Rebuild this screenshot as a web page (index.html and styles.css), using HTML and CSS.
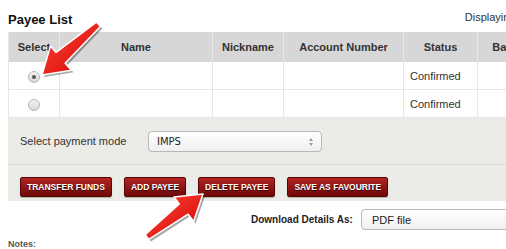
FILE: index.html
```html
<!DOCTYPE html>
<html lang="en">
<head>
  <meta charset="UTF-8" />
  <meta name="viewport" content="width=device-width, initial-scale=1.0"/>
  <title>Payee List</title>
  <link rel="stylesheet" href="styles.css">
</head>
<body>

  <div class="page">
    <div class="title-row">
      <h2>Payee List</h2>
      <span class="count">Displaying 1 - 2 of 2</span>
    </div>

    <table class="payees">
      <thead>
        <tr>
          <th class="c-select">Select</th>
          <th class="c-name">Name</th>
          <th class="c-nick">Nickname</th>
          <th class="c-acc">Account Number</th>
          <th class="c-status">Status</th>
          <th class="c-bank">Bank Name</th>
        </tr>
      </thead>
      <tbody>
        <tr>
          <td class="c-select"><span class="radio checked"></span></td>
          <td></td>
          <td></td>
          <td></td>
          <td>Confirmed</td>
          <td></td>
        </tr>
        <tr>
          <td class="c-select"><span class="radio"></span></td>
          <td></td>
          <td></td>
          <td></td>
          <td>Confirmed</td>
          <td></td>
        </tr>
      </tbody>
    </table>

    <div class="panel">
      <div class="mode-row">
        <label>Select payment mode</label>
        <div class="dropdown mode">IMPS<span class="updown"></span></div>
      </div>
      <div class="actions">
        <button>TRANSFER FUNDS</button>
        <button>ADD PAYEE</button>
        <button>DELETE PAYEE</button>
        <button>SAVE AS FAVOURITE</button>
      </div>
    </div>

    <div class="download-row">
      <span class="download-label">Download Details As:</span>
      <div class="dropdown file">PDF file</div>
    </div>

    <div class="notes">Notes:</div>
  </div>

  <!-- annotation arrows -->
  <svg class="arrows" width="506" height="249" viewBox="0 0 506 249">
    <defs>
      <linearGradient id="red" x1="0" y1="0" x2="1" y2="1">
        <stop offset="0" stop-color="#ff4a3a"/>
        <stop offset="1" stop-color="#d40000"/>
      </linearGradient>
    </defs>
    <g fill="rgba(0,0,0,0.35)" transform="translate(2,2)">
      <polygon points="42,75 50.5,45.9 56.1,52.4 96.4,22.1 100.4,26.6 65.1,63.3 71.4,70.3"/>
      <polygon points="203,194 173.9,196.9 179.3,204 145.2,234.6 148.8,239.4 188.1,214.2 193.6,221.4"/>
    </g>
    <g fill="url(#red)" stroke="#fff" stroke-width="1.5" stroke-linejoin="round">
      <polygon points="42,75 50.5,45.9 56.1,52.4 96.4,22.1 100.4,26.6 65.1,63.3 71.4,70.3"/>
      <polygon points="203,194 173.9,196.9 179.3,204 145.2,234.6 148.8,239.4 188.1,214.2 193.6,221.4"/>
    </g>
  </svg>

</body>
</html>
```

FILE: styles.css
```css
body {
  margin: 0;
  font-family: 'Liberation Sans', Arial, sans-serif;
  font-size: 11px;
  color: #333;
  background: #fff;
  overflow: hidden;
}

.page {
  width: 559px;
  padding: 0 0 0 8px;
}

.title-row {
  display: flex;
  justify-content: space-between;
  align-items: flex-end;
  height: 32px;
}
.title-row h2 {
  margin: 0 0 5px;
  font-size: 13px;
  color: #111;
}
.count {
  margin: 0 5px 9px 0;
  color: #333;
}

/* table */
.payees {
  width: 559px;
  border-collapse: collapse;
  table-layout: fixed;
}
.payees th {
  height: 30px;
  background: #d7d7d7;
  font-weight: bold;
  color: #333;
  border-left: 1px solid #e8e8e8;
  padding: 0;
}
.payees td {
  height: 27px;
  border: 1px solid #e6e6e6;
  border-top: none;
  padding: 0 6px;
  text-align: left;
}
.payees td.c-select {
  text-align: center;
}
.c-select { width: 50px; }
.c-name { width: 152px; }
.c-nick { width: 70px; }
.c-acc { width: 119px; }
.c-status { width: 73px; }

.radio {
  display: inline-block;
  width: 10px;
  height: 10px;
  border-radius: 50%;
  border: 1px solid #b5b5b5;
  background: linear-gradient(#f4f4f4, #d8d8d8);
  vertical-align: middle;
  position: relative;
  top: 1px;
}
.radio.checked::after {
  content: '';
  display: block;
  width: 4px;
  height: 4px;
  margin: 3px;
  border-radius: 50%;
  background: #555;
}

/* grey panel */
.panel {
  background: #ebebe8;
}
.mode-row {
  display: flex;
  align-items: center;
  height: 46px;
  padding-left: 12px;
  border-bottom: 1px solid #dcdcd8;
}
.mode-row label {
  width: 128px;
  color: #333;
}
.dropdown {
  position: relative;
  display: flex;
  align-items: center;
  height: 19px;
  padding-left: 8px;
  border: 1px solid #b8b8b8;
  border-radius: 4px;
  background: linear-gradient(#ffffff, #f0f0f0);
  color: #222;
  box-sizing: border-box;
  font-family: 'DejaVu Sans', sans-serif;
  font-size: 10px;
}
.dropdown.mode {
  width: 174px;
  height: 21px;
}
.updown {
  position: absolute;
  right: 8px;
  top: 6px;
  width: 0;
  height: 0;
  border-left: 2px solid transparent;
  border-right: 2px solid transparent;
  border-bottom: 3px solid #999;
}
.updown::after {
  content: '';
  position: absolute;
  left: -2px;
  top: 5px;
  border-left: 2px solid transparent;
  border-right: 2px solid transparent;
  border-top: 3px solid #999;
}

.actions {
  display: flex;
  gap: 12px;
  padding: 12px 0 4px 12px;
}
.actions button {
  height: 20px;
  padding: 0 6px;
  border: 1px solid #5a0505;
  border-radius: 2px;
  background: linear-gradient(#b32424, #6d0909);
  color: #fff;
  font-family: 'Liberation Sans', Arial, sans-serif;
  font-size: 8.5px;
  font-weight: bold;
  text-shadow: 0 1px 1px #300;
  box-shadow: 0 1px 1px rgba(0,0,0,0.25);
}

.download-row {
  display: flex;
  align-items: center;
  gap: 8px;
  padding: 8px 0 0 243px;
}
.download-label {
  font-size: 10px;
  font-weight: bold;
  color: #222;
}
.dropdown.file {
  width: 170px;
  height: 21px;
  padding-left: 10px;
  font-family: 'Liberation Sans', Arial, sans-serif;
  font-size: 11px;
}

.notes {
  margin-top: 9px;
  font-size: 9px;
  font-weight: bold;
  color: #555;
}

/* arrows lie over the page */
.arrows {
  position: absolute;
  top: 0;
  left: 0;
}
```
